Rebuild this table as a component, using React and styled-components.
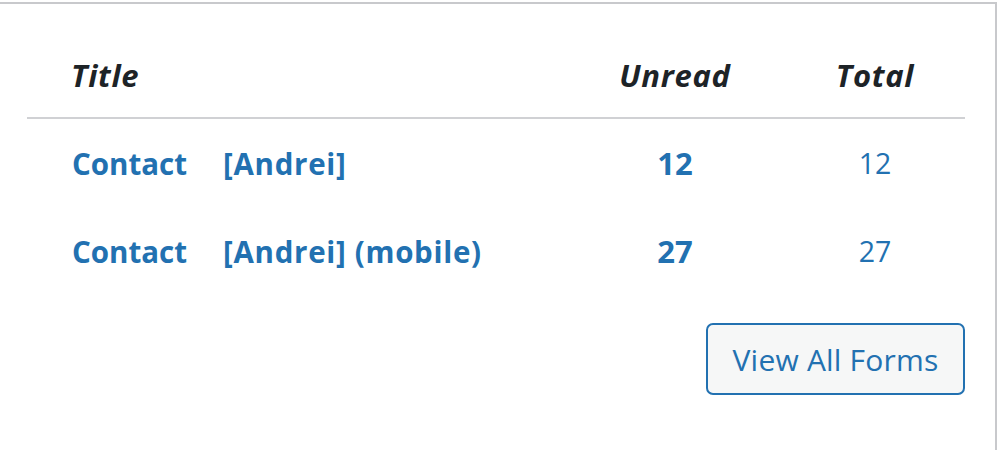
import styled, { createGlobalStyle } from "styled-components";

const GlobalStyle = createGlobalStyle`
  html, body {
    margin: 0;
    padding: 0;
    background: #ffffff;
  }
  body {
    font-family: "Open Sans", "Noto Sans", "Liberation Sans", sans-serif;
    color: #1d2327;
  }
`;

const StyledWidget = styled.section`
  box-sizing: border-box;
  width: 997px;
  height: 450px;
  margin-top: 2px;
  border-top: 2px solid #c8c9cc;
  border-right: 2px solid #c8c9cc;
  padding: 0 30px 0 27px;
  background: #ffffff;

  .forms-table {
    display: grid;
    grid-template-columns: 1fr 200px 180px;
    column-gap: 10px;
  }

  .forms-table--head {
    height: 113px;
    align-items: end;
    border-bottom: 2px solid #d0d1d4;
  }

  .forms-table--head-cell {
    padding-bottom: 23px;
    font-size: 31px;
    font-weight: 700;
    font-style: italic;
    line-height: 38px;
    color: #1d2327;
    letter-spacing: 0.7px;
  }

  .forms-table--head-cell.first {
    padding-left: 44px;
  }

  .forms-table--row {
    height: 88px;
    align-items: center;
  }

  .forms-table--title {
    padding-left: 45px;
    font-size: 29.5px;
    font-weight: 700;
    color: #2271b1;
    white-space: nowrap;
  }

  .forms-table--title span + span {
    margin-left: 36px;
    letter-spacing: 0.7px;
  }

  .centered {
    text-align: center;
  }

  .forms-table--unread {
    font-size: 31px;
    font-weight: 700;
    color: #2271b1;
  }

  .forms-table--total {
    font-size: 28.5px;
    font-weight: 400;
    color: #2271b1;
  }

  .forms-actions {
    display: flex;
    justify-content: flex-end;
    margin-top: 28px;
  }
`;

const Button = styled.a`
  box-sizing: border-box;
  display: inline-flex;
  align-items: center;
  justify-content: center;
  width: 259px;
  height: 72px;
  border: 2px solid #2271b1;
  border-radius: 7px;
  background: #f6f7f7;
  color: #2271b1;
  font-size: 30px;
  font-weight: 400;
  letter-spacing: 0.2px;
  text-decoration: none;
`;

const forms = [
  { title: "Contact", author: "[Andrei]", unread: 12, total: 12 },
  { title: "Contact", author: "[Andrei] (mobile)", unread: 27, total: 27 },
];

const App = () => {
  return (
    <>
      <GlobalStyle />
      <StyledWidget>
        <div className="forms-table forms-table--head">
          <div className="forms-table--head-cell first">Title</div>
          <div className="forms-table--head-cell centered">Unread</div>
          <div className="forms-table--head-cell centered">Total</div>
        </div>
        <div className="forms-table--body">
          {forms.map((form, i) => (
            <div className="forms-table forms-table--row" key={i}>
              <div className="forms-table--title">
                <span>{form.title}</span>
                <span>{form.author}</span>
              </div>
              <div className="forms-table--unread centered">{form.unread}</div>
              <div className="forms-table--total centered">{form.total}</div>
            </div>
          ))}
        </div>
        <div className="forms-actions">
          <Button href="#">View All Forms</Button>
        </div>
      </StyledWidget>
    </>
  );
};

export default App;
